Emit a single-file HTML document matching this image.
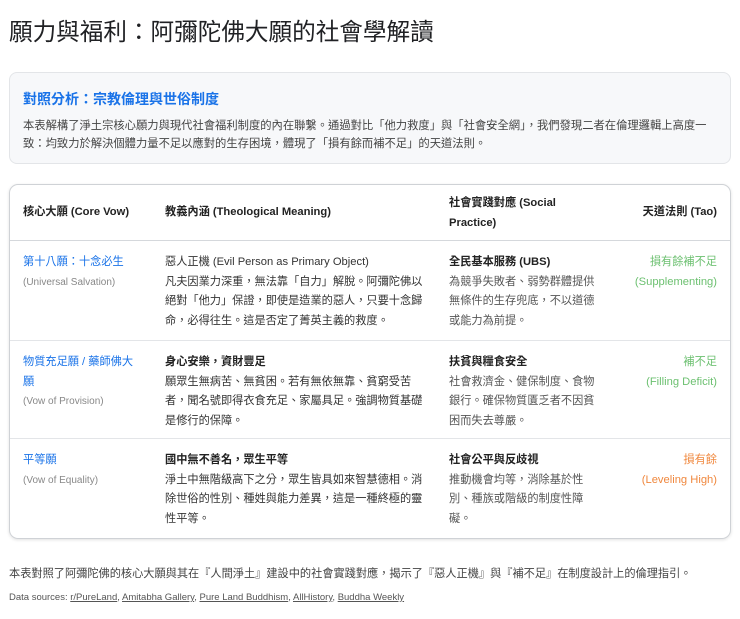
<!DOCTYPE html>
<html><head><meta charset="utf-8"><style>
*{margin:0;padding:0;box-sizing:border-box}
body{width:740px;height:619px;background:#fff;font-family:"Liberation Sans","Noto Sans CJK TC",sans-serif;color:#222;position:relative;overflow:hidden}
h1{position:absolute;left:9px;top:13px;font-size:23.6px;font-weight:400;color:#202124}
.info{position:absolute;left:9px;top:72px;width:722px;height:92px;background:#f7f8fa;border:1px solid #e3e5e8;border-radius:8px;padding:14px 13px}
.info h2{font-size:14px;font-weight:700;color:#1a73e8;margin-top:2px}
.info p{font-size:11.3px;line-height:18px;color:#444;margin-top:8px;width:695px}
.tbl{position:absolute;left:9px;top:184px;width:722px;height:355px;border:1px solid #cfd2d6;border-radius:9px;box-shadow:0 1px 3px rgba(0,0,0,.12);overflow:hidden}
.row{position:absolute;left:0;width:720px;border-bottom:1px solid #e3e5e8}
.c{position:absolute;font-size:11.2px;line-height:19.5px}
.c1{left:13px;width:115px}.c2{left:155px;width:262px}.c3{left:439px;width:150px}.c4{right:13px;text-align:right;width:110px}
.hd .c{font-weight:700;color:#222}
.blue{color:#1a73e8}
.gray{color:#888;font-size:10px}
.b{font-weight:700;color:#222}
.t{color:#333}
.s{color:#555}
.green{color:#6cc070}
.orange{color:#f0883e}
.foot{position:absolute;left:9px;top:565px;font-size:11.2px;color:#444}
.src{position:absolute;left:9px;top:592px;font-size:9.5px;color:#555}
.src u{color:#555}
</style></head><body>
<h1>願力與福利：阿彌陀佛大願的社會學解讀</h1>
<div class="info"><h2>對照分析：宗教倫理與世俗制度</h2>
<p>本表解構了淨土宗核心願力與現代社會福利制度的內在聯繫。通過對比「他力救度」與「社會安全網」，我們發現二者在倫理邏輯上高度一致：均致力於解決個體力量不足以應對的生存困境，體現了「損有餘而補不足」的天道法則。</p></div>
<div class="tbl">
<div class="row hd" style="top:0;height:56px;border-bottom:1px solid #d5d8dc">
<div class="c c1" style="top:18px">核心大願 (Core Vow)</div>
<div class="c c2" style="top:18px">教義內涵 (Theological Meaning)</div>
<div class="c c3" style="top:9px;width:115px">社會實踐對應 (Social Practice)</div>
<div class="c c4" style="top:18px">天道法則 (Tao)</div>
</div>
<div class="row" style="top:56px;height:100px">
<div class="c c1" style="top:12px"><span class="blue">第十八願：十念必生</span><br><span class="gray">(Universal Salvation)</span></div>
<div class="c c2" style="top:12px"><span class="t">惡人正機 (Evil Person as Primary Object)</span><br><span class="t">凡夫因業力深重，無法靠「自力」解脫。阿彌陀佛以絕對「他力」保證，即使是造業的惡人，只要十念歸命，必得往生。這是否定了菁英主義的救度。</span></div>
<div class="c c3" style="top:12px"><span class="b">全民基本服務 (UBS)</span><br><span class="s">為競爭失敗者、弱勢群體提供無條件的生存兜底，不以道德或能力為前提。</span></div>
<div class="c c4" style="top:12px"><span class="green">損有餘補不足<br>(Supplementing)</span></div>
</div>
<div class="row" style="top:156px;height:98px">
<div class="c c1" style="top:12px"><span class="blue">物質充足願 / 藥師佛大願</span><br><span class="gray">(Vow of Provision)</span></div>
<div class="c c2" style="top:12px"><span class="b">身心安樂，資財豐足</span><br><span class="t">願眾生無病苦、無貧困。若有無依無靠、貧窮受苦者，聞名號即得衣食充足、家屬具足。強調物質基礎是修行的保障。</span></div>
<div class="c c3" style="top:12px"><span class="b">扶貧與糧食安全</span><br><span class="s">社會救濟金、健保制度、食物銀行。確保物質匱乏者不因貧困而失去尊嚴。</span></div>
<div class="c c4" style="top:12px"><span class="green">補不足<br>(Filling Deficit)</span></div>
</div>
<div class="row" style="top:254px;height:100px;border-bottom:none">
<div class="c c1" style="top:12px"><span class="blue">平等願</span><br><span class="gray">(Vow of Equality)</span></div>
<div class="c c2" style="top:12px"><span class="b">國中無不善名，眾生平等</span><br><span class="t">淨土中無階級高下之分，眾生皆具如來智慧德相。消除世俗的性別、種姓與能力差異，這是一種終極的靈性平等。</span></div>
<div class="c c3" style="top:12px;width:140px"><span class="b">社會公平與反歧視</span><br><span class="s">推動機會均等，消除基於性別、種族或階級的制度性障礙。</span></div>
<div class="c c4" style="top:12px"><span class="orange">損有餘<br>(Leveling High)</span></div>
</div>
</div>
<div class="foot">本表對照了阿彌陀佛的核心大願與其在『人間淨土』建設中的社會實踐對應，揭示了『惡人正機』與『補不足』在制度設計上的倫理指引。</div>
<div class="src">Data sources: <u>r/PureLand</u>, <u>Amitabha Gallery</u>, <u>Pure Land Buddhism</u>, <u>AllHistory</u>, <u>Buddha Weekly</u></div>
</body></html>
